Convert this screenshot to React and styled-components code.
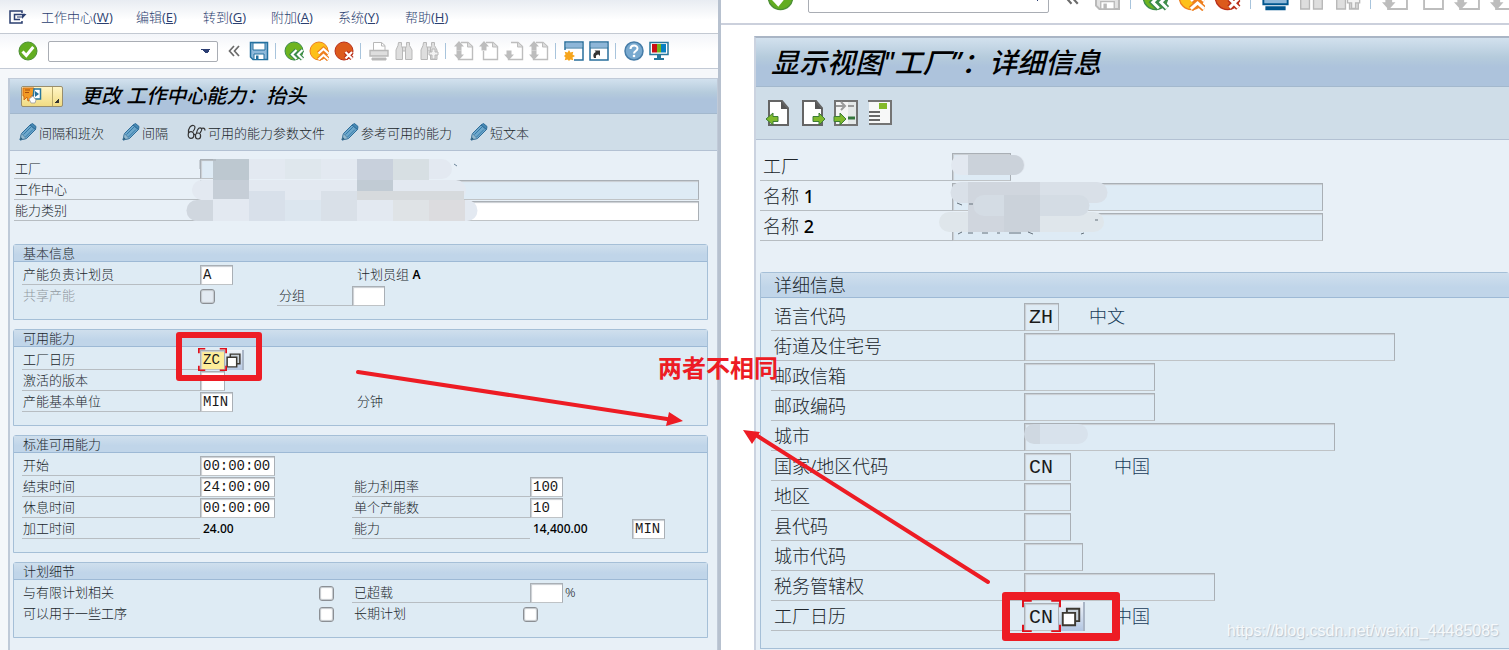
import React from "react";
import styled, { createGlobalStyle, css } from "styled-components";

const menus = [
  ["工作中心", "W", 95],
  ["编辑", "E", 67],
  ["转到", "G", 68],
  ["附加", "A", 67],
  ["系统", "Y", 67],
  ["帮助", "H", 60],
];

const details = [
  { label: "语言代码", width: 35, value: "ZH", note: "中文", gap: 30 },
  { label: "街道及住宅号", width: 371 },
  { label: "邮政信箱", width: 131 },
  { label: "邮政编码", width: 131 },
  { label: "城市", width: 311, city: true },
  { label: "国家/地区代码", width: 47, value: "CN", note: "中国", gap: 43 },
  { label: "地区", width: 47 },
  { label: "县代码", width: 47 },
  { label: "城市代码", width: 59 },
  { label: "税务管辖权", width: 191 },
  { label: "工厂日历", width: 35, value: "CN", note: "中国", gap: 29, help: true },
];

/* ---------- icons ---------- */

const CheckIcon = ({ size = 20 }) => (
  <svg width={size} height={size} viewBox="0 0 20 20">
    <circle cx="10" cy="10" r="9" fill="#62ad21" stroke="#4b8f35" />
    <path d="M4.500 10.500l3.800 4 7-8.500" fill="none" stroke="#fff" strokeWidth="3" />
  </svg>
);

const ChevronIcon = ({ size = 12 }) => (
  <svg width={size} height={size} viewBox="0 0 12 12" fill="none" stroke="#6b6b6b" strokeWidth="1.700">
    <path d="M6 1L1.500 6 6 11M11 1L6.500 6l4.500 5" />
  </svg>
);

const SaveIcon = ({ size = 20, off }) => {
  const line = off ? "#b9b9b9" : "#24719f";
  return (
    <svg width={size} height={size} viewBox="0 0 20 20">
      <path d="M1.500 1.500h17v17H4l-2.500-2.500z" fill={off ? "#e2e2e2" : "#8fb9da"} stroke={line} strokeWidth="1.500" />
      <path d="M4 2h12v7H4z" fill="#fff" stroke={line} />
      <path d="M5 13h10v5.500H5z" fill="#fff" stroke={line} />
      <path d="M7 14.500h2.500v4H7z" fill={line} />
    </svg>
  );
};

const NavIcon = ({ kind, size = 20 }) => {
  const colors = {
    back: ["#6eb41f", "#3b8a4c"],
    up: ["#fdc01a", "#ee7f1f"],
    stop: ["#dc5a1c", "#b92f1a"],
  }[kind];
  const marks = {
    back: "M12.500 9l-4.500 4.500 4.500 4.500M18.500 9l-4.500 4.500 4.500 4.500",
    up: "M9.500 12.500l5-4.500 5 4.500M9.500 18.500l5-4.500 5 4.500",
    stop: "M11.500 11l6.500 6.500M18 11l-6.500 6.500",
  }[kind];
  return (
    <svg width={size} height={size} viewBox="0 0 20 20">
      <circle cx="10" cy="10" r="9" fill={colors[0]} stroke={colors[1]} />
      <path d={marks} fill="none" stroke={colors[1]} strokeWidth="4.500" />
      <path d={marks} fill="none" stroke="#fff" strokeWidth="2.200" />
    </svg>
  );
};

const PrintIcon = ({ size = 20, on }) => {
  const line = on ? "#00568e" : "#b8b8b8";
  return (
    <svg width={size} height={size} viewBox="0 0 20 20">
      <path d="M4.500 9V1.500h8l3.500 3V9" fill="#fff" stroke={line} />
      <path d="M12.500 1.500V5H16" fill="none" stroke={line} />
      <path d="M1 9.500h18v5.500H1z" fill={on ? "#8fb9da" : "#dedede"} stroke={line} strokeWidth="1.400" />
      <path d="M3 17h14v2H3z" fill={line} stroke={line} />
    </svg>
  );
};

const FindIcon = ({ size = 20, plus }) => (
  <svg width={size} height={size} viewBox="0 0 20 20" fill="#dedede" stroke="#b8b8b8">
    <path d="M4.500 1.500h3v3l1 3v11h-6.500V9l2-4.500zM12.500 1.500h3v3l2.500 4.500v9.500h-6.500V7.500l1-3z" />
    <path d="M8.500 6h3v4h-3z" />
    {plus && <path d="M13 8h3v3h3v3h-3v4h-3v-4h-3v-3h3z" fill="#f3f3f3" />}
  </svg>
);

const PageIcon = ({ up, down, size = 20 }) => (
  <svg width={size} height={size} viewBox="0 0 20 20">
    <path d="M7 1.500h7l4.500 4v13H4.500V10" fill="#fff" stroke="#bdbdbd" strokeWidth="1.400" />
    <path d="M13.500 1.500V6h5" fill="#ddd" stroke="#bdbdbd" />
    {up && <path d="M5 0l5 5.500H7.500v4h-5v-4H0z" fill="#bdbdbd" />}
    {down && <path d="M5 19l5-5.500H7.500v-4h-5v4H0z" fill="#bdbdbd" />}
  </svg>
);

const WindowIcon = ({ star }) => (
  <svg width="20" height="20" viewBox="0 0 20 20">
    <path d="M1 1h18v18H1z" fill="#fff" stroke="#286f9c" strokeWidth="1.500" />
    <path d="M2 2h16v4.500H2z" fill="#8db6d8" />
    <path d="M1 7h18" stroke="#286f9c" />
    {star ? (
      <>
        <path d="M0 9h10v11H0z" fill="#fff" />
        <path d="M5 9l1.400 2.500 2.900-.8-.8 2.900L11 15l-2.500 1.400.8 2.900-2.900-.8L5 20l-1.400-1.500-2.900.8.8-2.900L0 15l1.500-1.400-.8-2.900 2.900.8z" fill="#f6a51c" />
      </>
    ) : (
      <path d="M5 17c-1.500-3.500 0-5.500 2-6L5.500 9.500H11V15l-1.500-1.500c-2 0-3 1-2.500 3.500z" fill="#333" />
    )}
  </svg>
);

const HelpIcon = () => (
  <svg width="20" height="20" viewBox="0 0 20 20">
    <circle cx="10" cy="10" r="9" fill="#78a9cf" stroke="#467da9" strokeWidth="1.500" />
    <path d="M6.500 8c0-4.500 7-4.500 7-.5 0 2.500-3.500 2.500-3.500 5" fill="none" stroke="#fff" strokeWidth="2" />
    <circle cx="10" cy="15" r="1.300" fill="#fff" />
  </svg>
);

const MonitorIcon = () => (
  <svg width="20" height="20" viewBox="0 0 20 20">
    <path d="M1 1.500h18v12H1z" fill="#fff" stroke="#28779c" strokeWidth="1.500" />
    <path d="M3 3h5v8.500H3z" fill="#cc0e12" />
    <path d="M8 3h4v8.500H8z" fill="#75b51c" />
    <path d="M12 3h5v8.500h-5z" fill="#087fc1" />
    <path d="M8 14h4v3h3v2H5v-2h3z" fill="#28779c" />
  </svg>
);

const ExitIcon = () => (
  <svg width="18" height="14" viewBox="0 0 18 14" fill="none" stroke="#2b3f70" strokeWidth="1.500">
    <path d="M13 3V1H1v12h12v-2" />
    <path d="M16 4.500H5.500V9.500H11" />
    <path d="M8 7h6" strokeWidth="1" />
    <path d="M13 4h4.500L13 9z" fill="#2b3f70" stroke="none" />
  </svg>
);

const PencilIcon = () => (
  <svg width="18" height="18" viewBox="0 0 18 18">
    <path d="M1 17l1.500-6.500L11 2l5.500 4.500-9 9z" fill="#6da7cb" stroke="#2e6c98" />
    <path d="M11 2l2.500-1.500L17 3.500l-.5 3z" fill="#4588b4" stroke="#2e6c98" />
    <path d="M4.500 11.500L12 4M6.500 14l7.500-7.500" stroke="#357aa8" />
    <path d="M2.500 10.500l4.500 5-6 1.500z" fill="#93b9cf" stroke="#4a7d9f" strokeWidth=".7" />
    <path d="M1 17l.8-3 2 2.300z" fill="#285b7b" />
  </svg>
);

const GlassesIcon = () => (
  <svg width="19" height="16" viewBox="0 0 19 16" fill="none" stroke="#333" strokeWidth="1.200">
    <path d="M1.500 9C1 4 4 1 6.500 1.500 9 2 8 5 6 7.500" />
    <path d="M9.500 9c1-5 3.500-6 5-4.500 1 1-.5 3-1.500 4.500M14.500 4.500c2-1 3.500 0 3.500 2" />
    <ellipse cx="4" cy="11" rx="2.800" ry="3.300" />
    <ellipse cx="11" cy="12" rx="2.600" ry="3" />
    <path d="M6.500 10l2 1" />
  </svg>
);

const ServicesIcon = () => (
  <svg width="20" height="18" viewBox="0 0 20 18">
    <path d="M1 1h11v7l-3 1v4l-3 1-1-4-3 3V9H1z" fill="#f29a24" stroke="#d46c14" />
    <path d="M3 3h5M3 5.500h4" stroke="#a84d0d" />
    <path d="M12 2h6.500v10H11z" fill="#fff" stroke="#28779c" strokeWidth="1.500" />
    <path d="M13 4l4 3-4 3z" fill="#256f9b" />
    <path d="M7 12l4-3 3 4-1 3h-4z" fill="#fff" stroke="#999" strokeWidth=".8" />
  </svg>
);

const GreenArrow = ({ x = 0, left }) => (
  <path
    d={left ? "M1 20l7-6v3.500h5v5H8V26z" : "M13 20l-6-6v3.500H1v5h6V26z"}
    transform={`translate(${x} 0)`}
    fill="#7fb92d"
    stroke="#3d7d36"
  />
);

const SheetIcon = ({ next }) => (
  <svg width="27" height="28" viewBox="0 0 27 28">
    <path d="M4 2h13l6 7v17H4z" fill="#fff" stroke="#656565" strokeWidth="2" />
    <path d="M16 2v8h7z" fill="#555" />
    <GreenArrow left={!next} x={next ? 13 : 0} />
  </svg>
);

const OtherIcon = () => (
  <svg width="27" height="28" viewBox="0 0 27 28">
    <path d="M2 2h22v24H2z" fill="#f5f5f5" stroke="#737373" strokeWidth="2" />
    <path d="M15 3h8v22h-8z" fill="#e4e8e8" />
    <path d="M3 7h9M8 3l4 4-4 4M15 7h6" stroke="#9b9b9b" strokeWidth="2" fill="none" />
    <path d="M15 19h7" stroke="#34763c" strokeWidth="3" />
    <GreenArrow />
  </svg>
);

const TextIcon = () => (
  <svg width="27" height="28" viewBox="0 0 27 28">
    <path d="M2 2h22v23H2z" fill="#f7f8f8" />
    <path d="M1 2h23v23H2" fill="none" stroke="#747474" strokeWidth="2" />
    <path d="M12 4h8v6h-8z" fill="#83b929" />
    <path d="M2 13h11M2 17h11M2 21h11" stroke="#696969" strokeWidth="2" />
  </svg>
);

const MatchIcon = ({ size }) => (
  <svg width={size} height={size} viewBox="0 0 16 16">
    <path d="M5 2h9v9H5z" fill="#c9d2da" stroke="#3d3932" strokeWidth="1.400" />
    <path d="M2 5h9v9H2z" fill="#fff" stroke="#3d3932" strokeWidth="1.400" />
  </svg>
);

/* ---------- pieces ---------- */

const Field = ({ label, children, labelWidth = 178, plain, muted }) => (
  <FieldRow>
    <FieldLabel $width={labelWidth} $line={!plain} $muted={muted}>
      {label}
    </FieldLabel>
    {children}
  </FieldRow>
);

const Focus = ({ value, big }) => (
  <>
    <FocusBox>
      <Input aria-label="工厂日历" $width={big ? 35 : 25} $yellow={!big} $read={big} defaultValue={value} />
      <svg width="100%" height="100%" viewBox="0 0 40 40" preserveAspectRatio="none">
        <path
          d="M1 9V1h9M30 1h9v8M39 31v8h-9M10 39H1v-8"
          fill="none"
          stroke="#e0101a"
          strokeWidth="2"
          vectorEffect="non-scaling-stroke"
        />
      </svg>
    </FocusBox>
    <MatchButton aria-label="F4" $big={big}>
      <MatchIcon size={big ? 22 : 17} />
    </MatchButton>
  </>
);

const LeftWindow = () => (
  <Left>
    <MenuBar>
      <ExitIcon />
      <Menus>
        {menus.map(([name, key, width]) => (
          <Menu key={key} $width={width}>
            {name}
            <Latin>
              (<u>{key}</u>)
            </Latin>
          </Menu>
        ))}
      </Menus>
    </MenuBar>
    <Toolbar>
      <Tool aria-label="enter"><CheckIcon /></Tool>
      <Command aria-label="command"><option></option></Command>
      <Chevron aria-label="collapse"><ChevronIcon /></Chevron>
      <Tool aria-label="save"><SaveIcon /></Tool>
      <Divider />
      <Tool aria-label="back"><NavIcon kind="back" /></Tool>
      <Tool aria-label="exit"><NavIcon kind="up" /></Tool>
      <Tool aria-label="cancel"><NavIcon kind="stop" /></Tool>
      <Divider />
      <Tool aria-label="print"><PrintIcon /></Tool>
      <Tool aria-label="find"><FindIcon /></Tool>
      <Tool aria-label="find next"><FindIcon plus /></Tool>
      <Divider />
      <Tool aria-label="first page"><PageIcon up down /></Tool>
      <Tool aria-label="previous page"><PageIcon up /></Tool>
      <Tool aria-label="next page"><PageIcon down /></Tool>
      <Tool aria-label="last page"><PageIcon up down /></Tool>
      <Divider />
      <Tool aria-label="new session"><WindowIcon star /></Tool>
      <Tool aria-label="shortcut"><WindowIcon /></Tool>
      <Divider />
      <Tool aria-label="help"><HelpIcon /></Tool>
      <Tool aria-label="layout"><MonitorIcon /></Tool>
    </Toolbar>
    <LeftScreen>
      <TitleBar>
        <Services aria-label="services">
          <ServicesIcon />
          <Corner />
        </Services>
        <Title>更改 工作中心能力：抬头</Title>
      </TitleBar>
      <Actions>
        <Action $width={103}><PencilIcon />间隔和班次</Action>
        <Action $width={65}><PencilIcon />间隔</Action>
        <Action $width={154}><GlassesIcon />可用的能力参数文件</Action>
        <Action $width={129}><PencilIcon />参考可用的能力</Action>
        <Action $width={80}><PencilIcon />短文本</Action>
      </Actions>
      <LeftBody>
        <Header>
          <Field label="工厂" labelWidth={186}>
            <Input aria-label="工厂" $width={50} $read readOnly />
          </Field>
          <Field label="工作中心" labelWidth={186}>
            <Input aria-label="工作中心" $fill $read readOnly />
          </Field>
          <Field label="能力类别" labelWidth={186}>
            <Input aria-label="能力类别" $fill />
          </Field>
          <LeftMask viewBox="0 0 292 64">
            <path d="M30 1h226a10 10 0 0 1 0 20H30zM17 22h253a9 9 0 0 1 0 20H15a9 9 0 0 1 2-20zM11 42h270a10 10 0 0 1 0 21H11a10 10 0 0 1 0-21z" fill="#e3e9f1" />
            <path d="M27 1h36v21H27z" fill="#bdc8d0" />
            <path d="M27 22h36v19H27z" fill="#c6ced7" />
            <path d="M63 33h36v30H63z" fill="#d8e0ea" />
            <path d="M99 1h36v20H99z" fill="#dfe7ed" />
            <path d="M99 42h36v21H99z" fill="#dce6ef" />
            <path d="M135 33h36v30h-36z" fill="#d9e0e8" />
            <path d="M171 1h36v21h-36z" fill="#c8d0dc" />
            <path d="M171 22h36v11h-36z" fill="#c1cbd4" />
            <path d="M207 1h36v21h-36z" fill="#d7dfe3" />
            <path d="M171 33h107v9H171z" fill="#d6dadd" />
            <path d="M207 42h36v21h-36z" fill="#dfe3e6" />
            <path d="M243 42h36v21h-36z" fill="#dcdcdf" />
            <path d="M27 42v21H11a10 10 0 0 1 0-21z" fill="#d0d7df" />
            <path d="M14 11V2h16" fill="none" stroke="#a9afb5" />
            <path d="M268 6l3 2" stroke="#6b8499" />
          </LeftMask>
        </Header>

        <Group>
          <GroupTitle>基本信息</GroupTitle>
          <GroupBody>
            <Field label="产能负责计划员">
              <Input aria-label="产能负责计划员" $width={33} defaultValue="A" />
              <Note $left={124}>计划员组 <b>A</b></Note>
            </Field>
            <Field label="共享产能" plain muted>
              <Check type="checkbox" aria-label="共享产能" disabled />
              <SubLabel $left={62} $width={75}>分组</SubLabel>
              <Input aria-label="分组" $width={33} />
            </Field>
          </GroupBody>
        </Group>

        <Group>
          <GroupTitle>可用能力</GroupTitle>
          <GroupBody>
            <Field label="工厂日历">
              <Focus value="ZC" />
              <RedFrame />
            </Field>
            <Field label="激活的版本">
              <Input aria-label="激活的版本" $width={25} />
            </Field>
            <Field label="产能基本单位">
              <Input aria-label="产能基本单位" $width={33} defaultValue="MIN" />
              <Note $left={124}>分钟</Note>
            </Field>
          </GroupBody>
        </Group>

        <Group>
          <GroupTitle>标准可用能力</GroupTitle>
          <GroupBody>
            <Field label="开始">
              <Input aria-label="开始" $width={75} defaultValue="00:00:00" />
            </Field>
            <Field label="结束时间">
              <Input aria-label="结束时间" $width={75} defaultValue="24:00:00" />
              <SubLabel $left={77} $width={178}>能力利用率</SubLabel>
              <Input aria-label="能力利用率" $width={33} defaultValue="100" />
            </Field>
            <Field label="休息时间">
              <Input aria-label="休息时间" $width={75} defaultValue="00:00:00" />
              <SubLabel $left={77} $width={178}>单个产能数</SubLabel>
              <Input aria-label="单个产能数" $width={33} defaultValue="10" />
            </Field>
            <Field label="加工时间">
              <Figure $width={75}>24.00</Figure>
              <SubLabel $left={77} $width={178}>能力</SubLabel>
              <Figure $width={102}>14,400.00</Figure>
              <Input aria-label="能力单位" $width={33} defaultValue="MIN" />
            </Field>
          </GroupBody>
        </Group>

        <Group>
          <GroupTitle>计划细节</GroupTitle>
          <GroupBody>
            <Field label="与有限计划相关" labelWidth={297} plain>
              <Check type="checkbox" aria-label="与有限计划相关" />
              <SubLabel $left={18} $width={178}>已超载</SubLabel>
              <Input aria-label="已超载" $width={33} />
              <Note $left={2}>%</Note>
            </Field>
            <Field label="可以用于一些工序" labelWidth={297} plain>
              <Check type="checkbox" aria-label="可以用于一些工序" />
              <SubLabel $left={18} $width={171} $bare>长期计划</SubLabel>
              <Check type="checkbox" aria-label="长期计划" />
            </Field>
          </GroupBody>
        </Group>
      </LeftBody>
    </LeftScreen>
  </Left>
);

const RightWindow = () => (
  <Right>
    <CutToolbar>
      <Tool aria-label="enter" $big><CheckIcon size={27} /></Tool>
      <Command aria-label="command" $big><option></option></Command>
      <Chevron aria-label="collapse" $big><ChevronIcon size={15} /></Chevron>
      <Tool aria-label="save" $big><SaveIcon size={27} off /></Tool>
      <Divider $big />
      <Tool aria-label="back" $big><NavIcon kind="back" size={27} /></Tool>
      <Tool aria-label="exit" $big><NavIcon kind="up" size={27} /></Tool>
      <Tool aria-label="cancel" $big><NavIcon kind="stop" size={27} /></Tool>
      <Divider $big />
      <Tool aria-label="print" $big><PrintIcon size={27} on /></Tool>
      <Tool aria-label="find" $big><FindIcon size={27} /></Tool>
      <Tool aria-label="find next" $big><FindIcon size={27} plus /></Tool>
      <Divider $big />
      <Tool aria-label="first page" $big><PageIcon size={27} up down /></Tool>
      <Tool aria-label="previous page" $big><PageIcon size={27} /></Tool>
      <Tool aria-label="next page" $big><PageIcon size={27} down /></Tool>
      <Tool aria-label="last page" $big><PageIcon size={27} down /></Tool>
    </CutToolbar>
    <RightScreen>
      <TitleBar $big>
        <Title $big>显示视图"工厂”：详细信息</Title>
      </TitleBar>
      <Actions $big>
        <IconButton aria-label="previous entry"><SheetIcon /></IconButton>
        <IconButton aria-label="next entry"><SheetIcon next /></IconButton>
        <IconButton aria-label="other entry"><OtherIcon /></IconButton>
        <IconButton aria-label="variable list"><TextIcon /></IconButton>
      </Actions>
      <RightBody>
        <RightHeader>
          <Field label="工厂" labelWidth={192}>
            <Input aria-label="工厂" $width={59} $read readOnly />
          </Field>
          <Field label={<>名称 <b>1</b></>} labelWidth={192}>
            <Input aria-label="名称 1" $width={371} $read readOnly />
          </Field>
          <Field label={<>名称 <b>2</b></>} labelWidth={192}>
            <Input aria-label="名称 2" $width={371} $read readOnly />
          </Field>
          <RightMask viewBox="0 0 180 90">
            <path d="M24 4h54a10 10 0 0 1 0 20H24a10 10 0 0 1 0-20z" fill="#e2e8f0" />
            <path d="M31 4h46a10 10 0 0 1 0 20H31z" fill="#cbd2da" />
            <path d="M24 31h136a10 10 0 0 1 0 21H24a10 10 0 0 1 0-21z" fill="#d9e0e8" />
            <path d="M12 61h145a10 10 0 0 1 0 20H12a10 10 0 0 1 0-20z" fill="#dfe6eb" />
            <path d="M31 31h72v50H31z" fill="#d0d6de" />
            <path d="M47 44h95a10 10 0 0 1 0 21H47a10 10 0 0 1 0-21z" fill="#d4dce4" />
            <path d="M67 44h36v37H67z" fill="#cbd2da" />
            <path d="M20 52l5 2M32 53h4M21 83l4-2M31 82h5M45 82h6M60 82h3M72 82h12M91 81l5 2M144 83l3-1M158 69h3" stroke="#64707a" />
          </RightMask>
        </RightHeader>
        <Group>
          <GroupTitle>详细信息</GroupTitle>
          <GroupBody>
            {details.map((row) => (
              <Field key={row.label} label={row.label} labelWidth={253}>
                {row.help ? (
                  <>
                    <Focus value={row.value} big />
                    <RedFrame $big />
                  </>
                ) : (
                  <Input aria-label={row.label} $width={row.width} defaultValue={row.value} $read />
                )}
                {row.city && <CityMask />}
                {row.note && <Note $left={row.gap}>{row.note}</Note>}
              </Field>
            ))}
          </GroupBody>
        </Group>
      </RightBody>
    </RightScreen>
  </Right>
);

const App = () => (
  <>
    <Global />
    <Page>
      <LeftWindow />
      <RightWindow />
      <Arrows viewBox="0 0 640 230" aria-hidden="true">
        <path d="M3 3L312 50M633 213L401 66" stroke="#ed1c24" strokeWidth="4" strokeLinecap="round" />
        <path d="M328 52l-17 5 3-14zM388 61l17 2-8 12z" fill="#ed1c24" />
      </Arrows>
      <Remark>两者不相同</Remark>
      <Watermark>https://blog.csdn.net/weixin_44485085</Watermark>
    </Page>
  </>
);

export default App;

/* ---------- styles ---------- */

const Global = createGlobalStyle`
  * {
    box-sizing: border-box;
  }
  body {
    margin: 0;
    overflow: hidden;
    background: #fff;
  }
  button, input, select {
    font: inherit;
    color: inherit;
    margin: 0;
    padding: 0;
    border: 0;
  }
  svg {
    display: block;
    flex: none;
  }
`;

const Page = styled.main`
  position: relative;
  display: flex;
  height: 100vh;
  overflow: hidden;
  color: #20262b;
  font-family: "Noto Sans", "Noto Sans CJK SC", sans-serif;
  font-weight: 300;
`;

const Left = styled.section`
  display: flex;
  flex-direction: column;
  flex: 0 1 721px;
  min-width: 0;
  background: #f5f7fa;
  border-right: 3px solid #b7c1cf;
  font-size: 13px;
`;

const MenuBar = styled.nav`
  display: flex;
  flex: none;
  align-items: center;
  height: 34px;
  padding-left: 9px;
  border-bottom: 1px solid #c3c9d2;
  background: linear-gradient(#e8ecf2, #ffffff 60%);
`;

const Menus = styled.div`
  display: flex;
  margin-left: 14px;
`;

const Menu = styled.button`
  width: ${(props) => props.$width}px;
  background: none;
  color: #2b3f70;
  text-align: left;
  white-space: nowrap;
`;

const Latin = styled.span`
  font-family: "Open Sans", sans-serif;
  font-weight: 400;
  font-size: 13px;
`;

const Toolbar = styled.div`
  display: flex;
  flex: none;
  align-items: center;
  height: 35px;
  padding-left: 18px;
  border-bottom: 1px solid #c3cad5;
  background: linear-gradient(#f3f5f9, #ffffff 50%);
`;

const Tool = styled.button`
  display: flex;
  flex: none;
  margin-right: ${(props) => (props.$big ? 9 : 5)}px;
  background: none;
`;

const Command = styled.select`
  flex: none;
  width: ${(props) => (props.$big ? 241 : 170)}px;
  height: ${(props) => (props.$big ? 29 : 21)}px;
  margin: 0 ${(props) => (props.$big ? 15 : 10)}px ${(props) => (props.$big ? -2 : 0)}px 5px;
  border: 1px solid #a9adb4;
  border-radius: 2px;
  appearance: none;
  background:
    linear-gradient(to bottom left, #2c3e73 50%, transparent 50%) right 11px center / 5px 5px no-repeat,
    linear-gradient(to bottom right, #2c3e73 50%, transparent 50%) right 6px center / 5px 5px no-repeat,
    #fff;
`;

const Chevron = styled.button`
  flex: none;
  width: ${(props) => (props.$big ? 30 : 21)}px;
  padding-bottom: ${(props) => (props.$big ? 6 : 0)}px;
  background: none;
`;

const Divider = styled.i`
  flex: none;
  width: 1px;
  height: ${(props) => (props.$big ? 24 : 16)}px;
  margin: ${(props) => (props.$big ? "0 11px 2px 0" : "0 8px 0 1px")};
  background: #a8c4dc;
`;

const LeftScreen = styled.div`
  flex: 1;
  margin: 9px 0 0 8px;
  border: solid #c0cad8;
  border-width: 1px 1px 0 2px;
  background: #e8f0f7;
`;

const TitleBar = styled.header`
  display: flex;
  align-items: center;
  height: ${(props) => (props.$big ? 49 : 35)}px;
  padding-left: ${(props) => (props.$big ? 15 : 11)}px;
  border-bottom: 1px solid #a3b8cd;
  background: linear-gradient(#d2e1ee, #b5cbdc 40%, #adc3dc 60%, #adc3dc);
`;

const Title = styled.h1`
  margin: 0;
  color: #000;
  font-size: ${(props) => (props.$big ? 28 : 20)}px;
  font-style: italic;
  font-weight: 500;
  line-height: ${(props) => (props.$big ? 44 : 30)}px;
  white-space: nowrap;
`;

const Services = styled.button`
  display: flex;
  justify-content: space-between;
  width: 42px;
  height: 21px;
  margin-right: 18px;
  border: 1px solid #998e6d;
  border-radius: 2px;
  background: linear-gradient(#fff5c5, #f1dc83);
`;

const Corner = styled.i`
  align-self: stretch;
  width: 10px;
  border-left: 1px solid #b8a96c;
  background: linear-gradient(135deg, transparent 50%, #333 50%) right 3px bottom 3px / 5px 5px no-repeat;
`;

const Actions = styled.div`
  display: flex;
  align-items: center;
  height: ${(props) => (props.$big ? 53 : 37)}px;
  padding-left: 9px;
  border-bottom: 1px solid #b3c1d3;
  background: #cfdde8;
`;

const Action = styled.button`
  display: flex;
  align-items: center;
  gap: 2px;
  width: ${(props) => props.$width}px;
  background: none;
  white-space: nowrap;
`;

const IconButton = styled.button`
  width: 34px;
  background: none;
`;

const LeftBody = styled.div`
  display: flex;
  flex-direction: column;
  gap: 9px;
  padding: 7px 9px 0 3px;
`;

const Header = styled.div`
  position: relative;
  margin: 0 9px 14px 1px;
`;

const FieldRow = styled.div`
  position: relative;
  display: flex;
  align-items: stretch;
  height: 21px;
`;

const underline = css`
  border-bottom: 1px solid #b7bdc2;
`;

const FieldLabel = styled.label`
  flex: none;
  width: ${(props) => props.$width}px;
  padding-left: 1px;
  line-height: 21px;
  white-space: nowrap;
  color: ${(props) => (props.$muted ? "#9199a1" : "inherit")};
  ${(props) => props.$line && underline}

  b {
    color: #000;
    font-weight: 500;
  }
`;

const SubLabel = styled.span`
  flex: none;
  width: ${(props) => props.$width}px;
  margin-left: ${(props) => props.$left}px;
  padding-left: 2px;
  line-height: 21px;
  white-space: nowrap;
  ${(props) => !props.$bare && underline}
`;

const Input = styled.input`
  flex: ${(props) => (props.$fill ? "1" : "none")};
  width: ${(props) => props.$width}px;
  min-width: 0;
  height: 20px;
  margin-top: 1px;
  padding-left: 2px;
  border: 1px solid #a9afb5;
  border-bottom-color: #bfc3c6;
  outline: 0;
  background: ${(props) => (props.$read ? "#deebf5" : props.$yellow ? "#feee9a" : "#fff")};
  box-shadow: inset 1px 1px 1px #c9ced2;
  color: #1a1a1a;
  font-family: "Liberation Mono", monospace;
  font-size: 14px;
`;

const Note = styled.span`
  margin-left: ${(props) => props.$left}px;
  line-height: 21px;
  white-space: nowrap;

  b {
    color: #000;
    font-size: 12px;
    font-weight: 600;
  }
`;

const Figure = styled.output`
  flex: none;
  width: ${(props) => props.$width}px;
  padding-left: 3px;
  color: #000;
  font-size: 12px;
  font-weight: 500;
  line-height: 21px;
`;

const Check = styled.input`
  flex: none;
  width: 15px;
  height: 15px;
  margin-top: 4px;
  border: 1px solid #8b8f94;
  border-radius: 3px;
  appearance: none;
  background: #fff;
  box-shadow: inset 0 0 1px 1px #c3c7cb;

  &:disabled {
    background: #e3eaf2;
  }
`;

const Group = styled.section`
  border: 1px solid #a5bfd7;
  border-radius: 3px 3px 0 0;
  background: #deebf4;
`;

const GroupTitle = styled.h2`
  height: 17px;
  margin: 0;
  padding-left: 9px;
  border-bottom: 1px solid #9db9d5;
  background: linear-gradient(#cfdfed, #c0d5e9 60%);
  font-size: 13px;
  font-weight: 300;
  line-height: 16px;
`;

const GroupBody = styled.div`
  padding: 2px 0 13px 8px;
`;

const FocusBox = styled.span`
  position: relative;
  display: flex;
  flex: none;

  svg {
    position: absolute;
    inset: -1px -2px;
    width: calc(100% + 4px);
    height: calc(100% + 2px);
  }
`;

const MatchButton = styled.button`
  display: flex;
  align-items: center;
  justify-content: center;
  width: ${(props) => (props.$big ? 26 : 19)}px;
  margin-top: 1px;
  border-right: 2px solid #a9b5c6;
  background: linear-gradient(#f0f4f9, #b3c6e2);
`;

/* highlight drawn around the calendar fields */
const RedFrame = styled.i`
  position: absolute;
  z-index: 2;
  left: ${(props) => (props.$big ? 231 : 154)}px;
  top: ${(props) => (props.$big ? -9 : -17)}px;
  width: ${(props) => (props.$big ? 118 : 86)}px;
  height: 49px;
  border: ${(props) => (props.$big ? 8 : 6)}px solid #ed1c24;
  border-radius: 3px;
`;

const LeftMask = styled.svg`
  position: absolute;
  left: 172px;
  top: 0;
  width: 292px;
`;

const Right = styled.section`
  display: flex;
  flex-direction: column;
  flex: 1;
  min-width: 0;
  font-size: 18px;
`;

const CutToolbar = styled.div`
  display: flex;
  flex: none;
  align-items: flex-end;
  height: 25px;
  padding: 0 0 12px 46px;
  overflow: hidden;
  border-bottom: 2px solid #cbd0dc;
`;

const RightScreen = styled.div`
  flex: 1;
  margin: 11px 0 0 33px;
  border-top: 2px solid #a9b5c5;
  border-left: 2px solid #cbd3e0;
  background: #e8f0f7;
`;

const RightBody = styled.div`
  padding: 11px 0 0 4px;

  ${FieldRow} {
    height: 30px;
  }
  ${FieldLabel}, ${Note} {
    line-height: 30px;
  }
  ${FieldLabel} {
    padding-left: 3px;
  }
  ${Input} {
    height: 28px;
    margin-top: 2px;
    padding-left: 4px;
    font-size: 20px;
  }
  ${Note} {
    color: #183c59;
  }
  ${Group} {
    border-right: 0;
  }
  ${GroupTitle} {
    height: 25px;
    padding-left: 13px;
    font-size: 18px;
    line-height: 24px;
  }
  ${GroupBody} {
    padding: 3px 0 17px 10px;
  }
`;

const RightHeader = styled.div`
  position: relative;
  margin-bottom: 31px;
`;

const RightMask = styled.svg`
  position: absolute;
  left: 177px;
  top: 0;
  width: 180px;
`;

const CityMask = styled.i`
  position: absolute;
  left: 253px;
  top: 3px;
  width: 64px;
  height: 20px;
  border-radius: 10px;
  background: linear-gradient(90deg, #cfd8e1 25%, #d8e2ec 25%);
`;

const Arrows = styled.svg`
  position: absolute;
  left: 355px;
  top: 369px;
  width: 640px;
  pointer-events: none;
`;

const Remark = styled.strong`
  position: absolute;
  left: 658px;
  top: 352px;
  color: #ed1c24;
  font-size: 24px;
  font-weight: 700;
  line-height: 32px;
`;

const Watermark = styled.span`
  position: absolute;
  right: 10px;
  bottom: 9px;
  color: #f6f9fb;
  font: 16px/20px "Liberation Sans", sans-serif;
  text-shadow: 1px 1px 1px #b8c3cd;
`;
